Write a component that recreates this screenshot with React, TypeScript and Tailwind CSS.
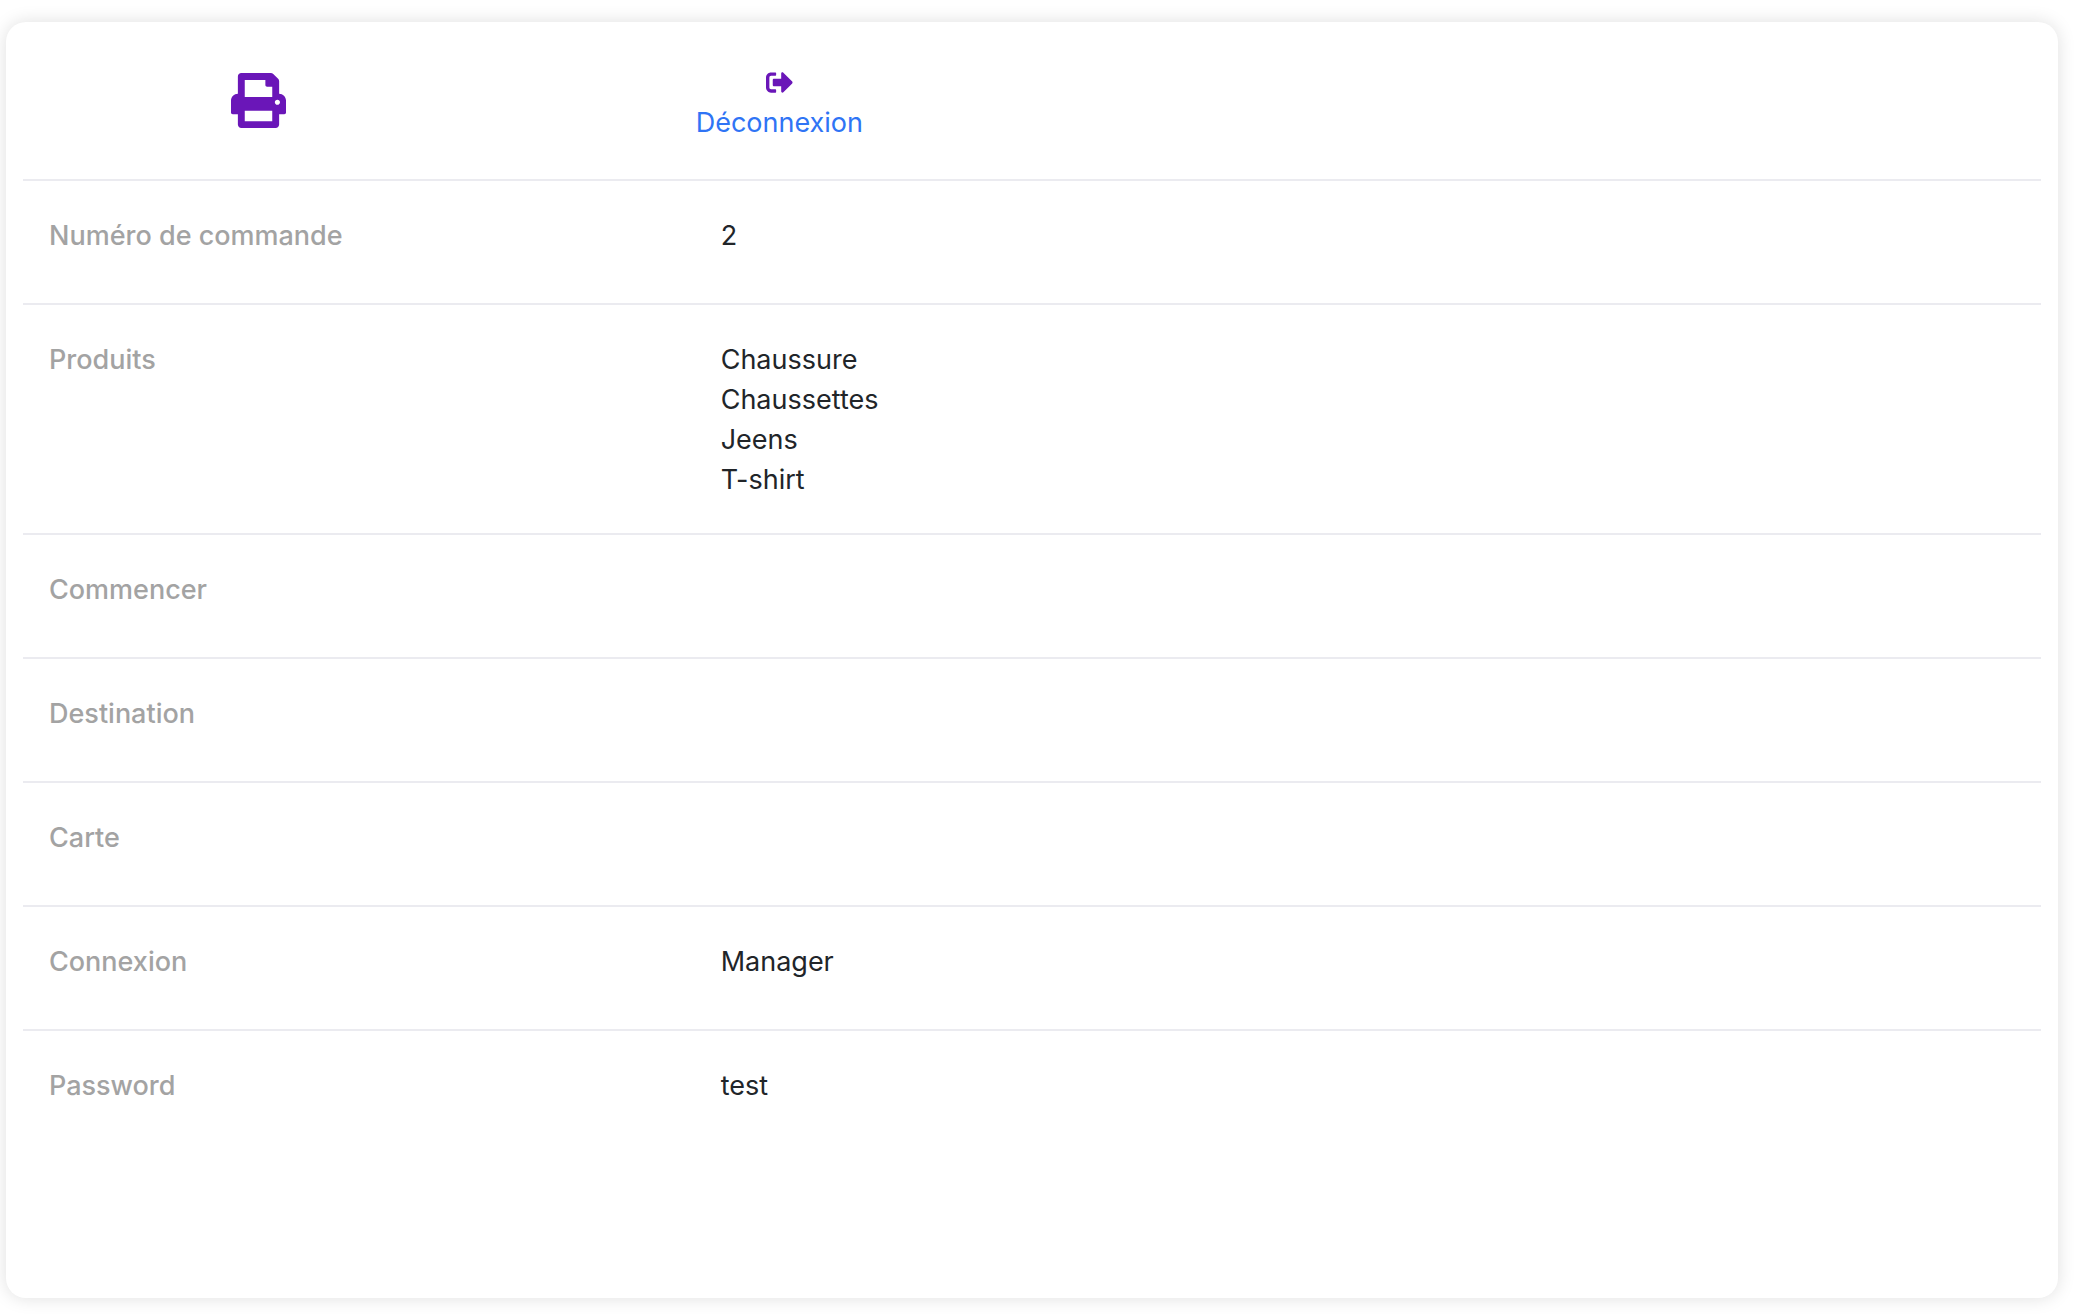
import { FaPrint, FaSignOutAlt } from "react-icons/fa";

const rows: { label: string; values: string[] }[] = [
  { label: "Numéro de commande", values: ["2"] },
  { label: "Produits", values: ["Chaussure", "Chaussettes", "Jeens", "T-shirt"] },
  { label: "Commencer", values: [] },
  { label: "Destination", values: [] },
  { label: "Carte", values: [] },
  { label: "Connexion", values: ["Manager"] },
  { label: "Password", values: ["test"] },
];

export default function App() {
  return (
    <div className="h-[1316px] w-[2074px] bg-white pt-[22px] pb-[18px] pl-[6px] pr-[16px] font-['Inter',sans-serif] overflow-hidden">
      <div className="h-full rounded-[20px] bg-white px-[17px] pt-0 shadow-[0_0_18px_rgba(0,0,0,0.13)]">
        <div className="flex h-[159px] border-b-2 border-[#ebebf0]">
          <div className="w-1/3 pl-[208px] pt-[51px]">
            <FaPrint className="text-[#6a16b8]" size={55} />
          </div>
          <div className="w-2/3 pt-[47px]">
            <div className="inline-flex flex-col items-center">
              <FaSignOutAlt className="text-[#6a16b8]" size={27} />
              <a href="#" className="mt-[7px] text-[27px] leading-[40px] text-[#2f74f5]">
                Déconnexion
              </a>
            </div>
          </div>
        </div>
        {rows.map((row, i) => (
          <div
            key={row.label}
            className={`flex min-h-[124px] pt-[35px] pb-[33px] ${i < rows.length - 1 ? "border-b-2 border-[#ebebf0]" : ""}`}
          >
            <div className="w-1/3 pl-[26px] text-[27px] leading-[40px] font-medium text-[#a3a3a3]">{row.label}</div>
            <div className="w-2/3 pl-[25px] text-[27px] leading-[40px] text-[#212529]">
              {row.values.map((v) => (
                <div key={v}>{v}</div>
              ))}
            </div>
          </div>
        ))}
      </div>
    </div>
  );
}
